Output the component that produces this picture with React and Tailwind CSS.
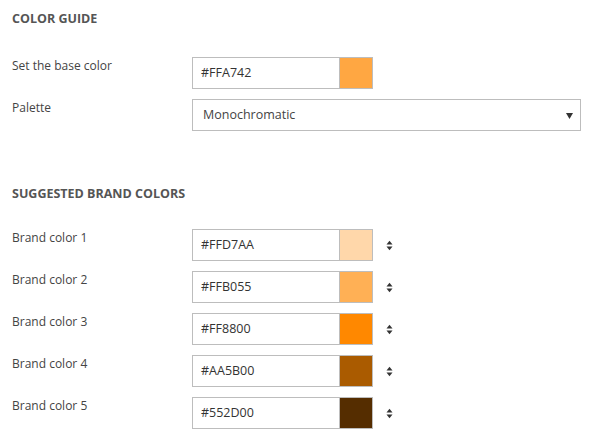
import React from 'react';

const brandColors = ['#FFD7AA', '#FFB055', '#FF8800', '#AA5B00', '#552D00'];

const SortIcon = () => (
    <svg width="7" height="11" viewBox="0 0 7 11" className="text-[#333]">
        <path d="M0.5 4.5 L3.5 0.8 L6.5 4.5 Z" fill="currentColor" />
        <path d="M0.5 6.5 L6.5 6.5 L3.5 10.2 Z" fill="currentColor" />
    </svg>
);

const ColorInput = ({ value }) => (
    <div className="flex h-[32px] w-[181px]">
        <div className="flex-1 border border-[#bdbdbd] bg-white pl-[8px] flex items-center text-[12.5px] text-[#333]">
            {value}
        </div>
        <div className="w-[33px] border border-l-0 border-[#bdbdbd]" style={{ backgroundColor: value }} />
    </div>
);

const Row = ({ label, children }) => (
    <div className="flex">
        <div className="w-[180px] shrink-0 leading-[18px] text-[12px] text-[#444]">{label}</div>
        {children}
    </div>
);

export default function App() {
    return (
        <div className="min-h-[439px] bg-white px-[12px] pt-[11px] font-['Open_Sans',sans-serif]">
            <h2 className="text-[12.5px] font-bold leading-[16px] text-[#555]">COLOR GUIDE</h2>

            <div className="mt-[30px] flex flex-col gap-[10px]">
                <Row label="Set the base color">
                    <ColorInput value="#FFA742" />
                </Row>
                <Row label="Palette">
                    <div className="relative flex h-[32px] w-[389px] shrink-0 items-center border border-[#bdbdbd] bg-white pl-[10px] text-[12.5px] text-[#444]">
                        Monochromatic
                        <svg width="7" height="6" viewBox="0 0 7 6" className="absolute right-[7px] top-[13px]">
                            <path d="M0 0 L7 0 L3.5 6 Z" fill="#333" />
                        </svg>
                    </div>
                </Row>
            </div>

            <h2 className="mt-[55px] text-[12.5px] font-bold leading-[16px] text-[#555]">SUGGESTED BRAND COLORS</h2>

            <div className="mt-[27px] flex flex-col gap-[10px]">
                {brandColors.map((c, i) => (
                    <Row key={c} label={`Brand color ${i + 1}`}>
                        <ColorInput value={c} />
                        <div className="ml-[13px] flex items-center">
                            <SortIcon />
                        </div>
                    </Row>
                ))}
            </div>
        </div>
    );
}
